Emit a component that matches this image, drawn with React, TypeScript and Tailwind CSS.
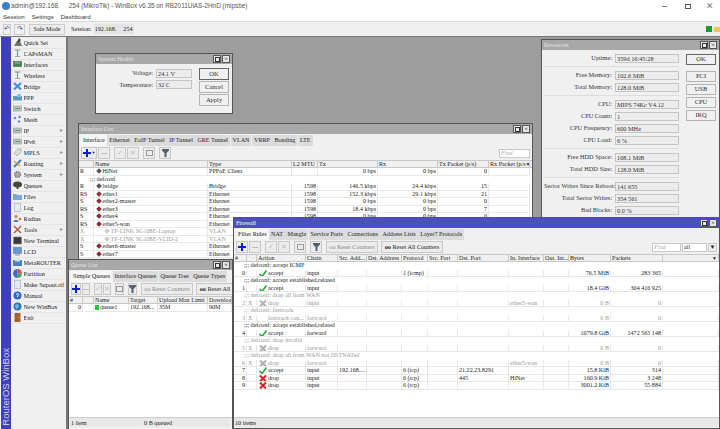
import type { ReactNode } from "react";

const menu = [
  ["Quick Set", "quick", false],
  ["CAPsMAN", "antenna", false],
  ["Interfaces", "iface", false],
  ["Wireless", "antenna", false],
  ["Bridge", "bridge", false],
  ["PPP", "ppp", false],
  ["Switch", "switch", false],
  ["Mesh", "mesh", false],
  ["IP", "switch", true],
  ["IPv6", "switch", true],
  ["MPLS", "mpls", true],
  ["Routing", "routing", true],
  ["System", "system", true],
  ["Queues", "queues", false],
  ["Files", "files", false],
  ["Log", "log", false],
  ["Radius", "radius", false],
  ["Tools", "tools", true],
  ["New Terminal", "terminal", false],
  ["LCD", "lcd", false],
  ["MetaROUTER", "meta", false],
  ["Partition", "partition", false],
  ["Make Supout.rif", "log", false],
  ["Manual", "manual", false],
  ["New WinBox", "globe", false],
  ["Exit", "exit", false],
] as const;

function MenuIcon({ kind }: { kind: string }) {
  let shape: ReactNode = null;
  if (kind === "quick") {
    shape = (
      <>
        <path d="M1 8 L4 3 H7 L9 8z" fill="#6b7a5a" />
        <path d="M6 0 L8 2 L5 5 L4 4z" fill="#444" />
      </>
    );
  } else if (kind === "antenna") {
    shape = (
      <>
        <path d="M1.5 1 H7.5 M4.5 1 V7" stroke="#7f9f8a" strokeWidth="1.2" />
        <path d="M2 7.5 H7" stroke="#9aa" strokeWidth="1" />
      </>
    );
  } else if (kind === "iface") {
    shape = (
      <>
        <rect x="0.5" y="1.5" width="8" height="5" fill="#3d8a50" stroke="#555" strokeWidth="0.6" />
        <path d="M2 3 H7" stroke="#9fd8a8" strokeWidth="0.8" />
      </>
    );
  } else if (kind === "bridge") {
    shape = <path d="M1 1 L8 7.5 M8 1 L1 7.5" stroke="#3f8fe0" strokeWidth="2.2" />;
  } else if (kind === "ppp") {
    shape = (
      <>
        <rect x="0" y="3" width="9" height="4.5" fill="#5a9ad0" />
        <rect x="4" y="1" width="4" height="3" fill="#8cc0e8" />
      </>
    );
  } else if (kind === "switch") {
    shape = (
      <>
        <rect x="0.5" y="2" width="8" height="5" fill="#b8c8c0" stroke="#8a9a92" strokeWidth="0.6" />
        <path d="M2 4.5 H7" stroke="#5a8a6a" strokeWidth="0.9" />
      </>
    );
  } else if (kind === "mesh") {
    shape = (
      <>
        <circle cx="2" cy="3" r="1.3" fill="#5a8ad8" />
        <circle cx="6.5" cy="2" r="1.3" fill="#5a8ad8" />
        <circle cx="6" cy="6.5" r="1.3" fill="#5a8ad8" />
      </>
    );
  } else if (kind === "mpls") {
    shape = <path d="M1 5 L5 1 H8 V4 L4 8z" fill="#d8e0d8" stroke="#8a9a8a" strokeWidth="0.6" />;
  } else if (kind === "routing") {
    shape = (
      <>
        <path d="M1 8 L8 1" stroke="#3f7fc0" strokeWidth="2" />
        <path d="M1 2 L7 7" stroke="#d09a3a" strokeWidth="1.4" />
      </>
    );
  } else if (kind === "system") {
    shape = <circle cx="4.5" cy="4.5" r="3" fill="#a8a8a8" stroke="#777" strokeWidth="1.2" strokeDasharray="1.2 0.8" />;
  } else if (kind === "queues") {
    shape = (
      <>
        <ellipse cx="4.5" cy="3.5" rx="4.5" ry="3" fill="#3f4a3a" />
        <rect x="3.5" y="5.5" width="2" height="2.5" fill="#6a4a2a" />
      </>
    );
  } else if (kind === "files") {
    shape = <path d="M0 2 H3.5 L4.5 3 H9 V8 H0z" fill="#7aa8d8" />;
  } else if (kind === "log") {
    shape = <rect x="1.5" y="0.5" width="6" height="8" fill="#e4eced" stroke="#a8b4b8" strokeWidth="0.7" />;
  } else if (kind === "radius") {
    shape = (
      <>
        <circle cx="3" cy="2.5" r="1.7" fill="#d0904a" />
        <path d="M0 8 Q3 3 6 8z" fill="#4a7ac0" />
        <circle cx="7" cy="5" r="1.2" fill="#d05a4a" />
      </>
    );
  } else if (kind === "tools") {
    shape = <path d="M1 1 L8 8 M8 1 L1 8" stroke="#b0604a" strokeWidth="1.6" />;
  } else if (kind === "terminal") {
    shape = <rect x="0.5" y="1" width="8" height="7" fill="#3a3a3a" stroke="#888" strokeWidth="0.6" />;
  } else if (kind === "lcd") {
    shape = (
      <>
        <rect x="0.5" y="0.5" width="8" height="6" fill="#5a9ad8" stroke="#777" strokeWidth="0.6" />
        <path d="M2 8 H7" stroke="#888" strokeWidth="1" />
      </>
    );
  } else if (kind === "meta") {
    shape = (
      <>
        <rect x="0" y="2" width="9" height="6" fill="#4a80c0" />
        <rect x="2" y="0.5" width="5" height="3" fill="#cfe0f0" />
      </>
    );
  } else if (kind === "partition") {
    shape = (
      <>
        <path d="M4.5 4.5 V0 A4.5 4.5 0 0 1 9 4.5z" fill="#d84a3a" />
        <path d="M4.5 4.5 H9 A4.5 4.5 0 0 1 4.5 9z" fill="#3fa84a" />
        <path d="M4.5 4.5 V9 A4.5 4.5 0 0 1 4.5 0z" fill="#3f6ad0" />
      </>
    );
  } else if (kind === "manual") {
    shape = (
      <>
        <circle cx="4.5" cy="4.5" r="4" fill="#2a6ab8" />
        <path d="M3 3.5 Q4.5 1.5 6 3.5 L4.5 5 V6" fill="none" stroke="#fff" strokeWidth="1" />
      </>
    );
  } else if (kind === "globe") {
    shape = (
      <>
        <circle cx="4.5" cy="4.5" r="4" fill="#2a78b8" />
        <path d="M2 3 L5 2 L6 5 L3 7z" fill="#7ab8d8" />
      </>
    );
  } else if (kind === "exit") {
    shape = (
      <>
        <rect x="1.5" y="0" width="6" height="9" fill="#a8602a" />
        <circle cx="6" cy="4.5" r="0.6" fill="#e8d8a8" />
      </>
    );
  }
  return (
    <svg width="9" height="9" viewBox="0 0 9 9" className="shrink-0">
      {shape}
    </svg>
  );
}

const ifaceCols = "grid grid-cols-[15px_114px_84px_26px_60px_60px_51px_41px]";
const queueCols = "grid grid-cols-[14px_11px_35px_29px_50px_24px]";
const fwCols =
  "grid grid-cols-[13px_10px_49px_32px_29px_35px_26px_30px_51px_35px_25px_42px_52px_56px]";

function WinButtons() {
  return (
    <div className="flex gap-[1px]">
      <div className="flex h-[8px] w-[8px] items-center justify-center border border-[#555] bg-[#e8e8e8]">
        <div className="h-[5px] w-[5px] border border-[#333]" />
      </div>
      <div className="flex h-[8px] w-[8px] items-center justify-center border border-[#555] bg-[#e8e8e8] text-[7px] leading-none text-black">
        ×
      </div>
    </div>
  );
}

function Window({
  title,
  className,
  active,
  children,
}: {
  title: string;
  className: string;
  active?: boolean;
  children: ReactNode;
}) {
  return (
    <div
      className={`absolute flex flex-col border border-[#555] ${
        active ? "bg-[#4a4fc4]" : "bg-[#a8a8a8]"
      } ${className}`}
    >
      <div
        className={`flex h-[10px] shrink-0 items-center justify-between px-[2px] text-[6px] ${
          active ? "text-white" : "text-[#e4e4e4]"
        }`}
      >
        <span>{title}</span>
        <WinButtons />
      </div>
      <div className="flex min-h-0 flex-1 flex-col overflow-hidden bg-[#f0f0f0]">
        {children}
      </div>
    </div>
  );
}

function Tabs({ items }: { items: string[] }) {
  return (
    <div className="flex h-[12px] shrink-0 items-end pl-[2px]">
      {items.map((t, i) => (
        <div
          key={t}
          className={`flex h-[11px] items-center px-[2px] text-[6.1px] whitespace-nowrap ${
            i === 0 ? "bg-[#f6f6f6]" : "ml-[0.5px] bg-[#dcdcdc]"
          }`}
        >
          {t}
        </div>
      ))}
    </div>
  );
}

function ToolBtn({ children, className }: { children?: ReactNode; className?: string }) {
  return (
    <div className={`flex h-[12px] items-center justify-center border border-[#c8c8c8] bg-[#ececec] ${className ?? "w-[12px]"}`}>
      {children}
    </div>
  );
}

function Plus() {
  return (
    <svg width="8" height="8" viewBox="0 0 8 8">
      <path d="M3 0h2v3h3v2H5v3H3V5H0V3h3z" fill="#0a1fd0" />
    </svg>
  );
}

function Funnel() {
  return (
    <svg width="7" height="8" viewBox="0 0 7 8">
      <path d="M0 0h7v1.5L4.5 4v4h-2V4L0 1.5z" fill="#51606e" />
    </svg>
  );
}

function Toolbar({ reset, wideAdd }: { reset?: boolean; wideAdd?: boolean }) {
  return (
    <div className="flex h-[14px] shrink-0 items-center pl-[2px] text-[6.2px]">
      <ToolBtn className={wideAdd ? "w-[16px] gap-[1px]" : "w-[12px]"}>
        <Plus />
        {wideAdd && <span className="text-[4px] leading-none">▼</span>}
      </ToolBtn>
      <ToolBtn className="ml-[1px] w-[12px]">
        <div className="h-[1px] w-[6px] bg-[#bbb]" />
      </ToolBtn>
      <ToolBtn className="ml-[4px] w-[12px]">
        <span className="text-[7px] leading-none text-[#bbb]">✓</span>
      </ToolBtn>
      <ToolBtn className="ml-[1px] w-[12px]">
        <span className="text-[7px] leading-none text-[#bbb]">✕</span>
      </ToolBtn>
      <ToolBtn className="ml-[4px] w-[12px]">
        <div className="h-[6px] w-[7px] border border-[#999]" />
      </ToolBtn>
      <ToolBtn className="ml-[4px] w-[12px]">
        <Funnel />
      </ToolBtn>
      {reset && (
        <>
          <ToolBtn className="ml-[4px] w-[52px] shrink-0">
            <span className="whitespace-nowrap text-[#888]">oo Reset Counters</span>
          </ToolBtn>
          <ToolBtn className="ml-[3px] w-[62px] shrink-0">
            <span className="whitespace-nowrap">
              <b>oo</b> Reset All Counters
            </span>
          </ToolBtn>
        </>
      )}
    </div>
  );
}

function HeadRow({ cols, labels, arrow }: { cols: string; labels: string[]; arrow?: boolean }) {
  return (
    <div className={`${cols} h-[8px] shrink-0 border-y border-[#c8c8c8] bg-[#f0f0f0] text-[6.1px] leading-[6px]`}>
      {labels.map((l, i) => (
        <div key={i} className="flex items-center justify-between overflow-hidden border-r border-[#c8c8c8] pl-[1px] whitespace-nowrap">
          <span>{l}</span>
          {arrow && i === labels.length - 1 && <span className="shrink-0 pr-[1px] text-[5px] leading-none">▼</span>}
        </div>
      ))}
    </div>
  );
}

function Cell({ children, right, dim }: { children?: ReactNode; right?: boolean; dim?: boolean }) {
  return (
    <div
      className={`overflow-hidden border-r border-b border-[#e8e8e8] px-[1px] whitespace-nowrap ${right ? "text-right" : ""} ${
        dim ? "text-[#999]" : ""
      }`}
    >
      {children}
    </div>
  );
}

function Comment({ text, dim, indent }: { text: string; dim?: boolean; indent: string }) {
  return (
    <div className={`h-[7.5px] ${indent} text-[6.1px] leading-[7px] whitespace-nowrap ${dim ? "text-[#999]" : ""}`}>
      ;;; {text}
    </div>
  );
}

const ifaceRows = [
  ["R", "HiNet", "PPPoE Client", "", "0 bps", "0 bps", "0", "0", "c"],
  null,
  ["R", "bridge", "Bridge", "1598", "146.5 kbps", "24.4 kbps", "15", "", "c"],
  ["RS", "ether1", "Ethernet", "1598", "152.3 kbps", "29.1 kbps", "21", "", "e"],
  ["S", "ether2-master", "Ethernet", "1598", "0 bps", "0 bps", "0", "", "e"],
  ["RS", "ether3", "Ethernet", "1598", "18.4 kbps", "0 bps", "7", "", "e"],
  ["S", "ether4", "Ethernet", "1598", "0 bps", "0 bps", "0", "", "e"],
  ["RS", "ether5-wan", "Ethernet", "1598", "", "", "", "", "e"],
  ["X", "TP-LINK SG108E-Laptop", "VLAN", "", "", "", "", "", "v"],
  ["X", "TP-LINK SG108E-VLID-2", "VLAN", "", "", "", "", "", "v"],
  ["S", "ether6-master", "Ethernet", "", "", "", "", "", "e"],
  ["S", "ether7", "Ethernet", "", "", "", "", "", "e"],
];

const fwRows: (string | string[])[] = [
  "defconf: accept ICMP",
  ["0", "", "a", "accept", "input", "", "", "1 (icmp)", "", "", "", "", "76.5 MiB", "283 365"],
  "defconf: accept established,related",
  ["1", "", "a", "accept", "input", "", "", "", "", "", "", "", "18.4 GiB", "304 416 925"],
  "~defconf: drop all from WAN",
  ["2", "X", "x", "drop", "input", "", "", "", "", "", "ether5-wan", "", "0 B", "0"],
  "~defconf: fasttrack",
  ["3", "X", "f", "fasttrack con...", "forward", "", "", "", "", "", "", "", "0 B", "0"],
  "defconf: accept established,related",
  ["4", "", "a", "accept", "forward", "", "", "", "", "", "", "", "1079.8 GiB", "1472 565 148"],
  "~defconf: drop invalid",
  ["5", "X", "x", "drop", "forward", "", "", "", "", "", "", "", "0 B", "0"],
  "~defconf:  drop all from WAN not DSTNATed",
  ["6", "X", "x", "drop", "forward", "", "", "", "", "", "ether5-wan", "", "0 B", "0"],
  ["7", "", "a", "accept", "input", "192.168....", "", "6 (tcp)", "", "21,22,23,8291", "", "", "15.8 KiB", "314"],
  ["8", "", "d", "drop", "input", "", "", "6 (tcp)", "", "445", "HiNet", "", "160.9 KiB", "3 248"],
  ["9", "", "d", "drop", "input", "", "", "6 (tcp)", "", "", "", "", "3001.2 KiB", "55 884"],
];

function ActionIcon({ kind }: { kind: string }) {
  if (kind === "a") {
    return (
      <svg width="8" height="7" viewBox="0 0 8 7" className="shrink-0">
        <path d="M0.5 4 L3 6.5 L7.5 0.5" fill="none" stroke="#22a83a" strokeWidth="1.6" />
      </svg>
    );
  }
  if (kind === "f") return <span className="w-[8px] shrink-0" />;
  const color = kind === "d" ? "#d42020" : "#b0b0b0";
  return (
    <svg width="8" height="7" viewBox="0 0 8 7" className="shrink-0">
      <path d="M1 0.5 L7 6.5 M7 0.5 L1 6.5" stroke={color} strokeWidth="2" />
    </svg>
  );
}

function FormRow({ label, value, w }: { label: string; value: string; w: string }) {
  return (
    <div className="flex h-[9px] items-center gap-[3px] text-[6.3px]">
      <span className={`${w} text-right whitespace-nowrap text-[#333]`}>{label}:</span>
      <span className="flex-1 border border-[#c4c4c4] bg-[#ececec] pl-[1px] leading-[7px] whitespace-nowrap text-[#333]">
        {value}
      </span>
    </div>
  );
}

function DlgBtn({ label, strong }: { label: string; strong?: boolean }) {
  return (
    <div
      className={`flex h-[11.5px] items-center justify-center bg-[#f0f0f0] text-[6.5px] text-[#333] ${
        strong ? "border border-[#666]" : "border border-[#b4b4b4]"
      }`}
    >
      {label}
    </div>
  );
}

export default function App() {
  return (
    <div className="flex h-[429px] w-[720px] flex-col overflow-hidden bg-white font-['Liberation_Serif',serif] text-[#222]">
      <div className="flex h-[12px] shrink-0 items-center pl-[2px] font-['Liberation_Sans',sans-serif] text-[6.4px] text-[#555]">
        <div className="mr-[1px] h-[8px] w-[8px] rounded-full bg-[#3f7fc8]" />
        <span className="whitespace-pre">admin@192.168.</span>
        <span className="ml-[9px] whitespace-pre">254 (MikroTik) - WinBox v6.35 on RB2011UiAS-2HnD (mipsbe)</span>
        <div className="ml-auto flex items-center">
          <div className="h-px w-[5px] bg-[#777]" />
          <div className="ml-[18px] h-[5px] w-[6px] border border-[#555]" />
          <span className="ml-[15px] mr-[6px] text-[9px] leading-none text-[#777]">✕</span>
        </div>
      </div>
      <div className="flex h-[9px] shrink-0 items-center gap-[7px] pl-[3px] font-['Liberation_Sans',sans-serif] text-[6.1px] text-[#333]">
        <span>Session</span>
        <span>Settings</span>
        <span>Dashboard</span>
      </div>
      <div className="flex h-[15px] shrink-0 items-center border-t border-[#d8d8d8] bg-[#f0f0f0] pl-[3px] text-[6.2px]">
        <div className="flex h-[11px] w-[8px] items-center justify-center border border-[#ccc] text-[7px] leading-none text-[#2a3fa0]">↶</div>
        <div className="ml-[3px] flex h-[11px] w-[11px] items-center justify-center border border-[#ccc] text-[7px] leading-none text-[#2a3fa0]">↷</div>
        <div className="ml-[4px] flex h-[11px] w-[36px] items-center justify-center border border-[#ccc] bg-[#ececec]">Safe Mode</div>
        <span className="ml-[6px]">Session:</span>
        <div className="ml-[2px] flex w-[40px] justify-between bg-[#e4e4e4] px-[1px]">
          <span>192.168.</span>
          <span>254</span>
        </div>
        <div className="ml-auto flex items-center gap-[2px]">
          <div className="h-[6px] w-[6px] bg-[#16a02a]" />
          <div className="h-[5px] w-[6px] bg-[#e8c84a]" />
        </div>
      </div>

      <div className="flex min-h-0 flex-1 border-t border-[#777]">
        <div className="ml-[1px] flex w-[10px] shrink-0 items-end justify-center bg-[#3f3fc0] pb-[3px]">
          <span className="rotate-180 font-['Liberation_Sans',sans-serif] text-[9.5px] leading-none whitespace-nowrap text-[#d0d0e8] [writing-mode:vertical-rl]">
            RouterOS WinBox
          </span>
        </div>
        <div className="flex w-[57px] shrink-0 flex-col border-r-2 border-[#777] bg-[#f0f0f0] pt-[0.5px]">
          {menu.map(([name, kind, arrow]) => (
            <div key={name} className="flex h-[11px] shrink-0 items-center gap-[1.5px] border-b border-[#e4e4e4] pl-[2px] text-[6.2px]">
              <MenuIcon kind={kind} />
              <span className="flex-1 overflow-hidden whitespace-nowrap">{name}</span>
              {arrow && <span className="pr-[3px] text-[6px] text-[#999]">▸</span>}
            </div>
          ))}
        </div>

        <div className="relative flex-1 bg-[#9d9d9d]" />
      </div>

      <Window title="System Health" className="left-[95px] top-[53px] h-[61px] w-[138px]">
        <div className="flex gap-[7px] pl-[2px] pt-[4px]">
          <div className="flex w-[94px] flex-col gap-[2.5px] pt-[0.5px]">
            <FormRow label="Voltage" value="24.1 V" w="w-[55px]" />
            <FormRow label="Temperature" value="32 C" w="w-[55px]" />
          </div>
          <div className="flex w-[30px] flex-col gap-[1.5px]">
            <DlgBtn label="OK" strong />
            <DlgBtn label="Cancel" />
            <DlgBtn label="Apply" />
          </div>
        </div>
      </Window>

      <Window title="Interface List" className="left-[78px] top-[123px] h-[180px] w-[455px]">
        <Tabs items={["Interface", "Ethernet", "EoIP Tunnel", "IP Tunnel", "GRE Tunnel", "VLAN", "VRRP", "Bonding", "LTE"]} />
        <div className="flex items-center justify-between">
          <Toolbar wideAdd />
          <div className="mr-[2px] h-[9px] w-[31px] border border-[#c8c8c8] bg-white pl-[1px] text-[6.1px] leading-[7px] text-[#aaa] italic">Find</div>
        </div>
        <HeadRow arrow cols={ifaceCols} labels={["", "Name", "Type", "L2 MTU", "Tx", "Rx", "Tx Packet (p/s)", "Rx Packet (p/s"]} />
        <div className="bg-white text-[6.1px] leading-[6.5px]">
          {ifaceRows.map((r, i) =>
            r ? (
              <div key={i} className={`${ifaceCols} h-[7.5px]`}>
                <Cell dim={r[8] === "v"}>{r[0]}</Cell>
                <Cell dim={r[8] === "v"}>
                  <span className={`flex items-center gap-[1.5px] ${r[8] === "v" ? "pl-[10px]" : "pl-[2px]"}`}>
                    <span className={`inline-block h-[4px] w-[4px] shrink-0 rotate-45 ${r[8] === "e" ? "bg-[#8a2a3a]" : r[8] === "v" ? "bg-[#ccc]" : "bg-[#555]"}`} />
                    {r[1]}
                  </span>
                </Cell>
                <Cell dim={r[8] === "v"}>{r[2]}</Cell>
                <Cell right>{r[3]}</Cell>
                <Cell right>{r[4]}</Cell>
                <Cell right>{r[5]}</Cell>
                <Cell right>{r[6]}</Cell>
                <Cell right>{""}</Cell>
              </div>
            ) : (
              <Comment key={i} text="defconf" indent="pl-[11px]" />
            ),
          )}
        </div>
      </Window>

      <Window title="Queue List" className="left-[68px] top-[259px] h-[171px] w-[165px]">
        <Tabs items={["Simple Queues", "Interface Queues", "Queue Tree", "Queue Types"]} />
        <Toolbar reset />
        <HeadRow cols={queueCols} labels={["#", "", "Name", "Target", "Upload Max Limit", "Download"]} />
        <div className="min-h-0 flex-1 bg-white text-[6.1px] leading-[7px]">
          <div className={`${queueCols} h-[8px]`}>
            <Cell right>0</Cell>
            <Cell />
            <Cell>
              <span className="flex items-center gap-[1px]">
                <span className="inline-block h-[5px] w-[4px] shrink-0 bg-[#22c83a]" />
                queue1
              </span>
            </Cell>
            <Cell>192.168...</Cell>
            <Cell>35M</Cell>
            <Cell>90M</Cell>
          </div>
        </div>
        <div className="mb-[2px] flex h-[10px] shrink-0 gap-[1px] border-t border-[#ccc] pl-[1px] text-[6.2px] leading-[9px]">
          <div className="w-[72px] bg-[#e8e8e8] pl-[1px]">1 item</div>
          <div className="w-[87px] bg-[#e8e8e8] pl-[1px]">0 B queued</div>
        </div>
      </Window>

      <Window title="Resources" className="left-[541px] top-[39px] h-[179px] w-[179px]">
        <div className="flex gap-[7px] pl-[2px] pt-[3.5px]">
          <div className="flex w-[135px] flex-col">
            <FormRow label="Uptime" value="359d 16:45:28" w="w-[68px]" />
            <div className="my-[3.5px] h-px bg-[#ddd]" />
            <div className="flex flex-col gap-[3px]">
              <FormRow label="Free Memory" value="102.6 MiB" w="w-[68px]" />
              <FormRow label="Total Memory" value="128.0 MiB" w="w-[68px]" />
            </div>
            <div className="my-[3.5px] h-px bg-[#ddd]" />
            <div className="flex flex-col gap-[3px]">
              <FormRow label="CPU" value="MIPS 74Kc V4.12" w="w-[68px]" />
              <FormRow label="CPU Count" value="1" w="w-[68px]" />
              <FormRow label="CPU Frequency" value="600 MHz" w="w-[68px]" />
              <FormRow label="CPU Load" value="6 %" w="w-[68px]" />
            </div>
            <div className="my-[3.5px] h-px bg-[#ddd]" />
            <div className="flex flex-col gap-[3px]">
              <FormRow label="Free HDD Space" value="108.1 MiB" w="w-[68px]" />
              <FormRow label="Total HDD Size" value="128.0 MiB" w="w-[68px]" />
            </div>
            <div className="my-[3.5px] h-px bg-[#ddd]" />
            <div className="flex flex-col gap-[3px]">
              <FormRow label="Sector Writes Since Reboot" value="141 655" w="w-[68px]" />
              <FormRow label="Total Sector Writes" value="354 561" w="w-[68px]" />
              <FormRow label="Bad Blocks" value="0.0 %" w="w-[68px]" />
            </div>
          </div>
          <div className="flex w-[30px] flex-col gap-[1.5px]">
            <div className="mb-[4px]">
              <DlgBtn label="OK" strong />
            </div>
            <DlgBtn label="PCI" />
            <DlgBtn label="USB" />
            <DlgBtn label="CPU" />
            <DlgBtn label="IRQ" />
          </div>
        </div>
      </Window>

      <Window active title="Firewall" className="left-[233px] top-[217px] h-[212px] w-[487px]">
        <Tabs items={["Filter Rules", "NAT", "Mangle", "Service Ports", "Connections", "Address Lists", "Layer7 Protocols"]} />
        <div className="flex items-center justify-between">
          <Toolbar reset />
          <div className="mr-[2px] flex items-center gap-[1px] text-[6.1px] leading-[7px]">
            <div className="h-[9px] w-[29px] border border-[#c8c8c8] bg-white pl-[1px] text-[#aaa] italic">Find</div>
            <div className="h-[9px] w-[25px] border border-[#c8c8c8] bg-white pl-[1px]">all</div>
            <div className="flex h-[9px] w-[9px] items-center justify-center border border-[#c8c8c8] text-[6px]">▼</div>
          </div>
        </div>
        <HeadRow arrow cols={fwCols} labels={["#", "", "Action", "Chain", "Src. Add...", "Dst. Address", "Protocol", "Src. Port", "Dst. Port", "In. Interface", "Out. Int...", "Bytes", "Packets", ""]} />
        <div className="min-h-0 flex-1 bg-white text-[6.1px] leading-[7px]">
          {fwRows.map((r, i) => {
            if (typeof r === "string") {
              const dim = r.startsWith("~");
              return <Comment key={i} text={dim ? r.slice(1) : r} dim={dim} indent="pl-[10px]" />;
            }
            const dim = r[1] === "X";
            return (
              <div key={i} className={`${fwCols} h-[7.5px]`}>
                <Cell dim={dim} right>{r[0]}</Cell>
                <Cell dim={dim}>{r[1]}</Cell>
                <Cell dim={dim}>
                  <span className="flex items-center gap-[1px] pl-[1px]">
                    <ActionIcon kind={r[2]} />
                    {r[3]}
                  </span>
                </Cell>
                <Cell dim={dim}>{r[4]}</Cell>
                <Cell dim={dim}>{r[5]}</Cell>
                <Cell dim={dim}>{r[6]}</Cell>
                <Cell dim={dim}>{r[7]}</Cell>
                <Cell dim={dim}>{r[8]}</Cell>
                <Cell dim={dim}>{r[9]}</Cell>
                <Cell dim={dim}>{r[10]}</Cell>
                <Cell dim={dim}>{r[11]}</Cell>
                <Cell dim={dim} right>{r[12]}</Cell>
                <Cell dim={dim} right>{r[13]}</Cell>
                <Cell />
              </div>
            );
          })}
        </div>
        <div className="mb-[1px] flex h-[10px] shrink-0 border-t border-[#ccc] bg-[#e8e8e8] pl-[1px] text-[6.2px] leading-[9px]">10 items</div>
      </Window>
    </div>
  );
}
